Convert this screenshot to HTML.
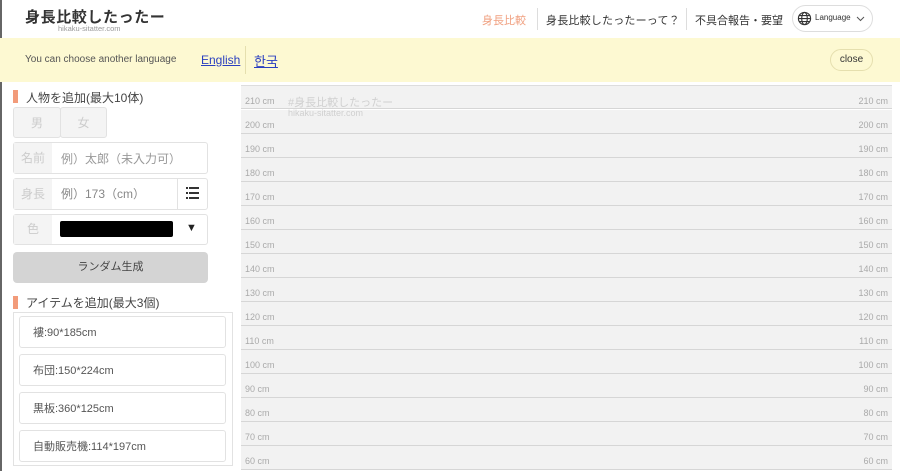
<!DOCTYPE html>
<html><head><meta charset="utf-8"><style>
*{margin:0;padding:0;box-sizing:border-box}
body{width:900px;height:471px;overflow:hidden;background:#fff;font-family:"Liberation Sans","Noto Sans CJK JP",sans-serif;position:relative;color:#333}
.abs{position:absolute}
.lb{left:0;top:0;width:2px;height:471px;background:#666}
.box{border:1px solid #e2e2e2;border-radius:3px;background:#fff}
.lab{background:#f4f4f4;color:#ccc;font-size:12px;text-align:center}
.row{position:absolute;left:241px;width:651px;height:24px;background:#f2f2f2;border-bottom:1px solid #d6d6d6}
.row span{position:absolute;font-size:9px;color:#aaa;top:10px}
</style></head><body>
<div class="abs lb"></div>
<div class="abs" style="left:25px;top:6px;font-size:15px;font-weight:bold;letter-spacing:0.6px;color:#333">身長比較したったー</div>
<div class="abs" style="left:58px;top:24px;font-size:7.5px;color:#999">hikaku-sitatter.com</div>
<div class="abs" style="left:482px;top:12px;font-size:11px;color:#f0a080">身長比較</div>
<div class="abs" style="left:537px;top:8px;width:1px;height:22px;background:#ddd"></div>
<div class="abs" style="left:546px;top:12px;font-size:11px;color:#333;letter-spacing:0.2px">身長比較したったーって？</div>
<div class="abs" style="left:686px;top:8px;width:1px;height:22px;background:#ddd"></div>
<div class="abs" style="left:695px;top:12px;font-size:11px;color:#333">不具合報告・要望</div>
<div class="abs" style="left:792px;top:5px;width:81px;height:27px;border:1px solid #ddd;border-radius:14px;background:#fff"></div>
<svg class="abs" style="left:797px;top:11px" width="15" height="15" viewBox="0 0 16 16" fill="none" stroke="#333" stroke-width="1.2"><circle cx="8" cy="8" r="6.5"/><ellipse cx="8" cy="8" rx="3" ry="6.5"/><path d="M1.5 8h13M2.5 4.8h11M2.5 11.2h11"/></svg>
<div class="abs" style="left:815px;top:13px;font-size:8px;color:#333">Language</div>
<svg class="abs" style="left:856px;top:16px" width="9" height="6" viewBox="0 0 9 6"><path d="M1 1l3.5 3.5L8 1" stroke="#555" fill="none"/></svg>
<div class="abs" style="left:0;top:38px;width:900px;height:44px;background:#fdf9d2"></div>
<div class="abs" style="left:25px;top:54px;font-size:10px;color:#555">You can choose another language</div>
<div class="abs" style="left:201px;top:53px;font-size:12px;color:#2a3fc0;text-decoration:underline">English</div>
<div class="abs" style="left:245px;top:46px;width:1px;height:28px;background:#e5dfae"></div>
<div class="abs" style="left:254px;top:51px;font-size:13px;color:#2a3fc0;text-decoration:underline">한국</div>
<div class="abs" style="left:830px;top:49px;width:43px;height:22px;border:1px solid #e5dfae;border-radius:11px;font-size:10px;text-align:center;line-height:20px;color:#333">close</div>

<div class="abs" style="left:13px;top:90px;width:5px;height:13px;background:#f29b7a"></div>
<div class="abs" style="left:26px;top:89px;font-size:12px;color:#444">人物を追加(最大10体)</div>
<div class="abs box lab" style="left:13px;top:107px;width:48px;height:31px;line-height:31px">男</div>
<div class="abs box lab" style="left:60px;top:107px;width:47px;height:31px;line-height:31px">女</div>
<div class="abs box" style="left:13px;top:142px;width:195px;height:32px"></div>
<div class="abs lab" style="left:14px;top:143px;width:38px;height:30px;line-height:30px">名前</div>
<div class="abs" style="left:61px;top:150px;font-size:12px;color:#999">例）太郎（未入力可）</div>
<div class="abs box" style="left:13px;top:178px;width:195px;height:32px"></div>
<div class="abs lab" style="left:14px;top:179px;width:38px;height:30px;line-height:30px">身長</div>
<div class="abs" style="left:61px;top:185px;font-size:12px;color:#888">例）173（cm）</div>
<div class="abs" style="left:177px;top:179px;width:1px;height:30px;background:#e2e2e2"></div>
<svg class="abs" style="left:186px;top:187px" width="13" height="12" viewBox="0 0 13 12" fill="#333"><rect x="0" y="0" width="2" height="2"/><rect x="3" y="0" width="10" height="2"/><rect x="0" y="5" width="2" height="2"/><rect x="3" y="5" width="10" height="2"/><rect x="0" y="10" width="2" height="2"/><rect x="3" y="10" width="10" height="2"/></svg>
<div class="abs box" style="left:13px;top:214px;width:195px;height:31px"></div>
<div class="abs lab" style="left:14px;top:215px;width:38px;height:29px;line-height:29px">色</div>
<div class="abs" style="left:60px;top:221px;width:113px;height:16px;background:#000;border-radius:2px"></div>
<div class="abs" style="left:186px;top:222px;font-size:11px;color:#222">▼</div>
<div class="abs" style="left:13px;top:252px;width:195px;height:31px;background:#d4d4d4;border-radius:4px;font-size:11px;text-align:center;line-height:31px;color:#444">ランダム生成</div>
<div class="abs" style="left:13px;top:296px;width:5px;height:13px;background:#f29b7a"></div>
<div class="abs" style="left:26px;top:294px;font-size:12px;color:#444">アイテムを追加(最大3個)</div>
<div class="abs" style="left:13px;top:312px;width:220px;height:154px;border:1px solid #e2e2e2"></div>
<div class="abs box" style="left:19px;top:316px;width:207px;height:32px;font-size:11px;line-height:32px;padding-left:13px;color:#555">褸:90*185cm</div>
<div class="abs box" style="left:19px;top:354px;width:207px;height:32px;font-size:11px;line-height:32px;padding-left:13px;color:#555">布団:150*224cm</div>
<div class="abs box" style="left:19px;top:392px;width:207px;height:32px;font-size:11px;line-height:32px;padding-left:13px;color:#555">黒板:360*125cm</div>
<div class="abs box" style="left:19px;top:430px;width:207px;height:32px;font-size:11px;line-height:32px;padding-left:13px;color:#555">自動販売機:114*197cm</div>

<div class="abs" style="left:241px;top:85px;width:651px;height:1px;background:#ddd"></div>
<div class="row" style="top:86px;height:23px"><span style="left:4px;top:10px">210 cm</span><span style="right:4px;top:10px">210 cm</span></div>
<div class="row" style="top:110px"><span style="left:4px">200 cm</span><span style="right:4px">200 cm</span></div>
<div class="abs" style="left:288px;top:94px;font-size:11px;color:#d0d0d0">#身長比較したったー</div>
<div class="abs" style="left:288px;top:108px;font-size:9px;color:#d0d0d0">hikaku-sitatter.com</div>
<div class="row" style="top:134px"><span style="left:4px">190 cm</span><span style="right:4px">190 cm</span></div>
<div class="row" style="top:158px"><span style="left:4px">180 cm</span><span style="right:4px">180 cm</span></div>
<div class="row" style="top:182px"><span style="left:4px">170 cm</span><span style="right:4px">170 cm</span></div>
<div class="row" style="top:206px"><span style="left:4px">160 cm</span><span style="right:4px">160 cm</span></div>
<div class="row" style="top:230px"><span style="left:4px">150 cm</span><span style="right:4px">150 cm</span></div>
<div class="row" style="top:254px"><span style="left:4px">140 cm</span><span style="right:4px">140 cm</span></div>
<div class="row" style="top:278px"><span style="left:4px">130 cm</span><span style="right:4px">130 cm</span></div>
<div class="row" style="top:302px"><span style="left:4px">120 cm</span><span style="right:4px">120 cm</span></div>
<div class="row" style="top:326px"><span style="left:4px">110 cm</span><span style="right:4px">110 cm</span></div>
<div class="row" style="top:350px"><span style="left:4px">100 cm</span><span style="right:4px">100 cm</span></div>
<div class="row" style="top:374px"><span style="left:4px">90 cm</span><span style="right:4px">90 cm</span></div>
<div class="row" style="top:398px"><span style="left:4px">80 cm</span><span style="right:4px">80 cm</span></div>
<div class="row" style="top:422px"><span style="left:4px">70 cm</span><span style="right:4px">70 cm</span></div>
<div class="row" style="top:446px"><span style="left:4px">60 cm</span><span style="right:4px">60 cm</span></div>
</body></html>
